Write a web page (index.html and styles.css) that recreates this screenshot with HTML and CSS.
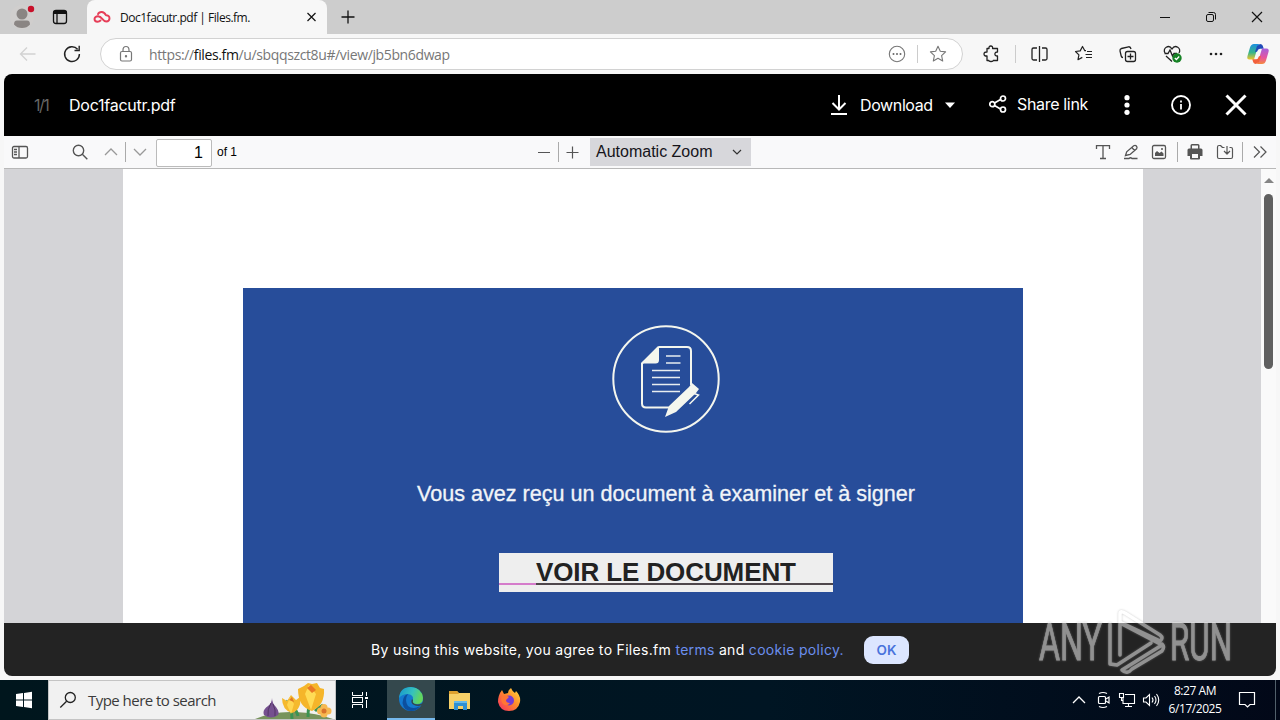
FILE: index.html
```html
<!DOCTYPE html>
<html lang="en">
<head>
<meta charset="utf-8">
<title>Doc1facutr.pdf | Files.fm.</title>
<link rel="stylesheet" href="styles.css">
</head>
<body>
<div class="desktop">
  <div class="tabs">
    <svg class="avatar" width="26" height="34" viewBox="0 0 26 34"><circle cx="12" cy="17" r="12" fill="#d0cecd"/><circle cx="12" cy="14" r="5.500" fill="#8a8583"/><path d="M4 24.500q0-4 3-4h10q3 0 3 4-3 3.500-8 3.500t-8-3.500z" fill="#8a8583"/><circle cx="21" cy="9" r="3.200" fill="#c8102a"/></svg>
    <svg class="spaces" width="20" height="20" viewBox="0 0 20 20" fill="none" stroke="#111" stroke-width="1.300"><rect x="3.500" y="3.500" width="13" height="13" rx="2.500"/><path d="M3.500 5.500h13" stroke-width="3"/><path d="M7 5v11.500"/></svg>
    <div class="tab">
      <svg width="18" height="14" viewBox="0 0 18 14" fill="none" stroke="#e63e58" stroke-width="1.900" stroke-linecap="round" stroke-linejoin="round"><path d="M5 4.200C5.600 2.700 7.200 1.900 8.800 2c2.300.1 3.200 1.500 4.200 3.200 2-.1 3.500 1.200 3.500 3.100 0 2-1.500 3.200-3.300 3.200-1.700 0-2.700-1-3.700-2.300C8.200 7.500 7 6.300 5 6.300 3 6.300 1.500 7.300 1.500 9s1.300 2.700 3 2.700c1.300 0 2.300-.5 3-1.200"/></svg>
      <span class="tab-title">Doc1facutr.pdf | Files.fm.</span>
      <svg width="12" height="12" viewBox="0 0 12 12" stroke="#111" stroke-width="1.200"><path d="M1.500 2l8 8M9.500 2l-8 8"/></svg>
    </div>
    <svg class="newtab" width="20" height="20" viewBox="0 0 20 20" stroke="#111" stroke-width="1.300"><path d="M3.500 10h13M10 3.500v13"/></svg>
    <div class="window-controls">
      <svg width="46" height="34" viewBox="0 0 46 34" stroke="#111"><path d="M18 17.500h10"/></svg>
      <svg width="46" height="34" viewBox="0 0 46 34" fill="none" stroke="#111"><rect x="18.500" y="14.500" width="7" height="7" rx="1.500"/><path d="M20.500 12.500h5q2 0 2 2v5"/></svg>
      <svg width="46" height="34" viewBox="0 0 46 34" stroke="#111" stroke-width="1.200"><path d="M18 12l10 10M28 12L18 22"/></svg>
    </div>
  </div>

  <div class="address">
    <svg class="tool" viewBox="0 0 44 40" fill="none" stroke="#d2d2d2" stroke-width="1.300"><path d="M29.500 20h-15M21 13.500L14.500 20l6.500 6.500"/></svg>
    <svg class="tool" viewBox="0 0 44 40" fill="none" stroke="#222" stroke-width="1.400"><path d="M27.600 15.300A7.400 7.400 0 1 0 29.400 20M29.200 11.800v4.700h-4.700"/></svg>
    <div class="url">
      <svg width="16" height="18" viewBox="0 0 16 18" fill="none" stroke="#777" stroke-width="1.200"><rect x="1.500" y="6.500" width="11" height="9.500" rx="1.500"/><path d="M4 6.500V5q0-3.500 3-3.500T10 5v1.500"/><circle cx="7" cy="11.200" r=".6" fill="#777"/></svg>
      <span class="url-text">https://<b>files.fm</b>/u/sbqqszct8u#/view/jb5bn6dwap</span>
      <svg width="20" height="20" viewBox="0 0 20 20" fill="none" stroke="#777" stroke-width="1.100"><circle cx="10" cy="10" r="7.700"/><g fill="#666" stroke="none"><circle cx="6.500" cy="10" r="1"/><circle cx="10" cy="10" r="1"/><circle cx="13.500" cy="10" r="1"/></g></svg>
      <i class="url-sep"></i>
      <svg width="20" height="20" viewBox="0 0 20 20" fill="none" stroke="#777" stroke-width="1.100" stroke-linejoin="round"><path d="M10 2.300l2.300 5 5.300.6-4 3.700 1.100 5.400L10 14.300 5.300 17l1.100-5.400-4-3.700 5.300-.6z"/></svg>
    </div>
    <svg class="tool ext" viewBox="0 0 44 40" fill="none" stroke="#222" stroke-width="1.300" stroke-linejoin="round"><path d="M18 14.500h2q-.3-2.500 1.800-2.500t1.800 2.500H28.500V18q-2.600-.2-2.600 2t2.600 2v4.500h-4.300q.2 1-2.200 1t-2-1H18V22q-3 .2-3-2t3-2z"/></svg>
    <i class="tool-sep"></i>
    <svg class="tool" viewBox="0 0 44 40" fill="none" stroke="#222" stroke-width="1.300"><path d="M20 14h-3.500q-1.500 0-1.500 1.500v9q0 1.500 1.500 1.500H20M25 14h3.500q1.500 0 1.500 1.500v9q0 1.500-1.500 1.500H25M22.500 12v16"/></svg>
    <svg class="tool fav" viewBox="0 0 44 40" fill="none" stroke="#222" stroke-width="1.200" stroke-linejoin="round"><path d="M24 16.700h-1.200L20.500 12.500l-2.300 4.400-4.700.6 3.400 3.400-.9 4.800 4.300-2.300M25 17.500h5M23.500 20.500h6.500M24 23.500h6"/></svg>
    <svg class="tool" viewBox="0 0 44 40" fill="none" stroke="#222" stroke-width="1.300"><rect x="19.500" y="17.500" width="10" height="10" rx="2"/><path d="M24.500 19.500v6M21.500 22.500h6M17 23.500q-1.500 0-1.800-1.500l-1.200-5q-.3-2 1.500-2.500l7-1.700q2-.3 2.500 2.200"/></svg>
    <svg class="tool" viewBox="0 0 44 40" fill="none" stroke="#222" stroke-width="1.300"><path d="M15 19c-3-5 4-9 7-4 3-5 10-1 7 4M16 22l6 5.500M14.500 19.500h3.500l2-3.500 2.500 6 1.500-2.500h3"/><circle cx="27" cy="24" r="4.700" fill="#168225" stroke="none"/><path d="M24.800 24l1.600 1.500 2.800-3" stroke="#fff"/></svg>
    <svg class="tool" viewBox="0 0 44 40"><g fill="#222"><circle cx="17" cy="20" r="1.300"/><circle cx="22" cy="20" r="1.300"/><circle cx="27" cy="20" r="1.300"/></g></svg>
    <svg class="copilot" width="24" height="24" viewBox="0 0 24 24">
      <defs><linearGradient id="ca" x1="0" y1="0" x2="0" y2="1"><stop offset="0" stop-color="#1b8fe0"/><stop offset=".55" stop-color="#37b58a"/><stop offset="1" stop-color="#f0c52a"/></linearGradient><linearGradient id="cb" x1="0" y1="0" x2="0" y2="1"><stop offset="0" stop-color="#a45fdc"/><stop offset=".6" stop-color="#e8549d"/><stop offset="1" stop-color="#f58a3c"/></linearGradient></defs>
      <path d="M14 2H8Q5 2 4 5.500L1.500 14q-1 3.500 2 3.500H8l3-10Q12 2 14 2z" fill="url(#ca)"/><path d="M14 2q2.500 0 3.200 3l.5 1.800H14q-2 0-3 3L9 10l2-6z" fill="#204bb8"/><path d="M10 22h6q3 0 4-3.500l2.500-8.500q1-3.500-2-3.500H16l-3 10Q12 22 10 22z" fill="url(#cb)"/><path d="M10 22q-2.500 0-3.200-3l-.5-1.800H10q2 0 3-3l2-.2-2 6z" fill="#f2603b"/>
    </svg>
  </div>

  <div class="viewer">
    <header class="file-bar">
      <span class="count">1/1</span>
      <span class="filename">Doc1facutr.pdf</span>
      <svg class="dl" width="20" height="24" viewBox="0 0 20 24" fill="none" stroke="#fff" stroke-width="2"><path d="M10 2v14M3.500 10l6.500 6.500 6.500-6.500M2 21h16"/></svg>
      <span class="download">Download</span>
      <svg class="caret" width="12" height="8" viewBox="0 0 12 8" fill="#fff"><path d="M1 1.500h10L6 7z"/></svg>
      <svg class="share-icon" width="20" height="20" viewBox="0 0 20 20" fill="none" stroke="#fff" stroke-width="1.700"><path d="M6.500 9l6-3.500M6.500 11.500l6 3.500"/><circle cx="4.300" cy="10.200" r="2.500"/><circle cx="15" cy="4.500" r="2.500"/><circle cx="15" cy="15.500" r="2.500"/></svg>
      <span class="share">Share link</span>
      <svg class="more" width="10" height="24" viewBox="0 0 10 24" fill="#fff"><circle cx="5" cy="4.700" r="2.600"/><circle cx="5" cy="12" r="2.600"/><circle cx="5" cy="19.300" r="2.600"/></svg>
      <svg class="info" width="24" height="24" viewBox="0 0 24 24" fill="none" stroke="#fff" stroke-width="1.900"><circle cx="12" cy="12" r="9"/><path d="M12 11v5.500M12 7.500v2" stroke-width="1.800"/></svg>
      <svg class="close" width="24" height="24" viewBox="0 0 24 24" stroke="#fff" stroke-width="3"><path d="M2.500 2.500l19 19M21.500 2.500l-19 19"/></svg>
    </header>

    <div class="pdf-bar">
      <svg class="ic side" viewBox="0 0 20 20" fill="none" stroke="#555" stroke-width="1.300"><rect x="2.500" y="4.500" width="15" height="11.500" rx="1.500"/><path d="M9 4.500V16M4 7.500h3M4 10h3M4 12.500h3"/></svg>
      <svg class="ic find" viewBox="0 0 20 20" fill="none" stroke="#555" stroke-width="1.400"><circle cx="8.500" cy="8.500" r="5.200"/><path d="M12.300 12.300l5 5"/></svg>
      <svg class="ic up" viewBox="0 0 20 20" fill="none" stroke="#999" stroke-width="1.300"><path d="M4 13l6-6 6 6"/></svg>
      <i class="bar-sep first"></i>
      <svg class="ic down" viewBox="0 0 20 20" fill="none" stroke="#999" stroke-width="1.300"><path d="M4 7l6 6 6-6"/></svg>
      <span class="page-input">1</span>
      <span class="of">of 1</span>
      <svg class="ic minus" viewBox="0 0 20 20" stroke="#555" stroke-width="1.200"><path d="M4 10.500h12"/></svg>
      <i class="bar-sep mid"></i>
      <svg class="ic plus" viewBox="0 0 20 20" stroke="#555" stroke-width="1.200"><path d="M4.500 10.500h12M10.500 4.500v12"/></svg>
      <span class="zoom"><span class="zoom-text">Automatic Zoom</span><svg width="12" height="8" viewBox="0 0 12 8" fill="none" stroke="#333" stroke-width="1.200"><path d="M2 2l4 4 4-4"/></svg></span>
      <svg class="ic text" viewBox="0 0 20 20" fill="none" stroke="#555" stroke-width="1.300"><path d="M3.500 7V3.700h13V7M10 3.700v13M7 16.500h6"/></svg>
      <svg class="ic draw" viewBox="0 0 20 20" fill="none" stroke="#555" stroke-width="1.300"><path d="M4.500 13.500l1.200-3.700 7-6q1.500-1 2.700.2t.2 2.800l-6.500 5.700zM10.800 5.500l2.800 3M3 16.500h5q1.500-1.500 3 0h5.500"/></svg>
      <svg class="ic image" viewBox="0 0 20 20"><rect x="3.500" y="3.500" width="13" height="13" rx="1.500" fill="none" stroke="#555" stroke-width="1.300"/><path d="M6 14v-3l2-2 2.500 2 2-1.500 2 2V14z" fill="#555"/><circle cx="13" cy="7" r="1" fill="#555"/></svg>
      <i class="bar-sep third"></i>
      <svg class="ic print" viewBox="0 0 20 20" fill="#555"><path d="M5.500 6.500v-3q0-1.500 1.500-1.500h6q1.500 0 1.500 1.500v3H16q1.500 0 1.500 1.500v6H15v2.500q0 1-1 1H6q-1 0-1-1V14H2.500V8q0-1.500 1.500-1.500z"/><path d="M7 3.500h6v3H7zM7 12h6v4H7z" fill="#f9f9fa"/></svg>
      <svg class="ic save" viewBox="0 0 20 20" fill="none" stroke="#555" stroke-width="1.200" stroke-linejoin="round"><path d="M9.500 5.500h-2l-2-2H4q-1.500 0-1.500 1.500v10q0 1.500 1.500 1.500h12q1.500 0 1.500-1.500V7q0-1.500-1.500-1.500h-1.500M12 4v8M9 9l3 3 3-3"/></svg>
      <i class="bar-sep fourth"></i>
      <svg class="ic tools" viewBox="0 0 20 20" fill="none" stroke="#555" stroke-width="1.200"><path d="M4 4.500L9.500 10 4 15.500M10.500 4.500L16 10l-5.500 5.500"/></svg>
    </div>

    <div class="canvas">
      <div class="page">
        <div class="card">
          <svg class="emblem" width="108" height="110" viewBox="0 0 108 110">
            <circle cx="54" cy="55" r="52.700" fill="none" stroke="#f4f6ee" stroke-width="2"/>
            <path d="M46.500 23H75q4 0 4 4v34M61 83.500H34q-4 0-4-4V39.500L46.500 23" fill="none" stroke="#f4f6ee" stroke-width="2"/>
            <path d="M47 22v14q0 3.500-3.500 3.500H30z" fill="#f4f6ee"/>
            <path d="M54 32h14.500M54 39h14.500M40 46.500h28M40 53.500h28M40 60.500h28M40 67.500h28" stroke="#e8edf0" stroke-width="1.500"/>
            <path d="M80 59l7 6-3 4-20 19-11 5 4-11 20-19z" fill="#f4f6ee"/><path d="M82 69.500l4.500 1.500-9 9" fill="none" stroke="#f4f6ee" stroke-width="1.500"/>
          </svg>
          <div class="lead">Vous avez reçu un document à examiner et à signer</div>
          <div class="cta"><span class="cta-text">VOIR LE DOCUMENT</span><i class="cta-line"></i></div>
        </div>
      </div>
      <div class="scrollbar"><i class="arrow"></i><i class="thumb"></i></div>
    </div>

    <footer class="cookies">
      <span class="cookie-text">By using this website, you agree to Files.fm <a>terms</a> and <a>cookie policy.</a></span>
      <span class="ok">OK</span>
    </footer>
  </div>

  <div class="taskbar">
    <svg class="start" width="48" height="40" viewBox="0 0 48 40" fill="#fff"><path d="M16 14l7-1v6.500h-7zM24 12.900l8-1.100v7.700h-8zM16 20.500h7V27l-7-1zM24 20.500h8v7.700l-8-1.100z"/></svg>
    <div class="search">
      <svg width="20" height="20" viewBox="0 0 20 20" fill="none" stroke="#222" stroke-width="1.300"><circle cx="11.300" cy="7.500" r="5"/><path d="M7.600 11.200L1.300 17.500"/></svg>
      <span class="search-text">Type here to search</span>
      <svg class="flowers" width="82" height="38" viewBox="0 0 82 38">
        <path d="M2 38q18-8 40-7t38 7z" fill="#77935c"/>
        <path d="M39 38q0-14-6-18M55 36q0-12 4-20M62 30q4-4 8-6M45 35q-2-8-7-9" fill="none" stroke="#3b9352" stroke-width="3"/>
        <path d="M19 17q0 5 4 9 4 5 2 8-7 5-14 0-2-5 4-9 4-3 4-8z" fill="#75508f"/><path d="M18 22q-4 7-3 13M20 23q3 6 2 12" stroke="#533565" fill="none"/>
        <path d="M29 17l5 3 4-6 5 5 4-3q2 12-8 16-10-3-10-15z" fill="#f5b92d"/><path d="M37 16l4 7-3 10-4-9z" fill="#ffd650"/><path d="M36 19l3-3 2 5z" fill="#df7826"/>
        <path d="M45 8l6-3 4-3 4 1 5-1 3 5 4 1q1 16-12 22-14-4-14-22z" fill="#f5b52a"/><path d="M56 4l7 9-5 16-6-16z" fill="#ffdb55"/><path d="M54 7l4-3 5 5-4 3z" fill="#e97824"/>
        <g fill="#f7b850"><circle cx="71" cy="26.500" r="3.500"/><circle cx="75" cy="30" r="3.500"/><circle cx="71" cy="33" r="3.500"/><circle cx="67.500" cy="30" r="3.500"/></g><circle cx="71" cy="30" r="2.500" fill="#d9732b"/>
      </svg>
    </div>
    <svg class="taskview" width="20" height="20" viewBox="0 0 20 20" fill="none" stroke="#fff"><path d="M2.500 2v3.500h10V2M2.500 18v-3.500h10V18M16.500 2v4M16.500 10v8"/><rect x="2.500" y="7.500" width="10" height="5"/><path d="M15 8h3" stroke-width="2"/></svg>
    <div class="app active">
      <svg width="26" height="26" viewBox="0 0 26 26"><defs><linearGradient id="ea" x1="0" y1="0" x2="1" y2=".3"><stop offset="0" stop-color="#1695cf"/><stop offset=".6" stop-color="#35c1be"/><stop offset="1" stop-color="#63d65d"/></linearGradient></defs><circle cx="13" cy="13" r="12" fill="#1479cf"/><path d="M1 12Q2 1 13 1q11 1 12 11 0 6-6 6-6 0-4-4 1-5-5-6-6 0-9 4z" fill="url(#ea)"/><path d="M10 8q-4 6 0 12 5 4 12 0-3 5-9 5Q6 25 4.500 17 5 9 10 8z" fill="#0c4f9e"/><path d="M14 13q-2 4 2 6 4 2 8 0l1.500-2.500Q22 19 18 18.300q-4-.8-3-4z" fill="#34484d"/></svg>
    </div>
    <svg class="explorer" width="24" height="24" viewBox="0 0 24 24"><path d="M1 3h8l2 2h11v16H1z" fill="#f6d068"/><path d="M1 3h8l2 3H1z" fill="#dda12f"/><path d="M6 13h13v9h-4v-4h-5v4H6z" fill="#2f8fd3"/><path d="M6 13h13v2H6z" fill="#66b9ea"/></svg>
    <svg class="firefox" width="26" height="26" viewBox="0 0 26 26"><defs><linearGradient id="ff" x1="1" y1="0" x2="0" y2="1"><stop offset="0" stop-color="#ffe040"/><stop offset=".45" stop-color="#ff8b2a"/><stop offset="1" stop-color="#f42a65"/></linearGradient></defs><path d="M6 3l2 4 4-1q0-3 3-5 1 3 4 5l1-2q5 5 4 11-2 9-11 9T2 15Q2 8 6 3z" fill="url(#ff)"/><circle cx="13" cy="13.500" r="5" fill="#743bd3"/><path d="M6 9q4-2 7 1l-3 3q0 3 4 3-3 4-7 1-3-4-1-8z" fill="#ff7534"/></svg>
    <div class="tray">
      <svg width="24" height="24" viewBox="0 0 24 24" fill="none" stroke="#fff" stroke-width="1.300"><path d="M6 15l6-6 6 6"/></svg>
      <svg width="24" height="24" viewBox="0 0 24 24" fill="none" stroke="#fff" stroke-width="1.200"><rect x="7.500" y="8.500" width="7" height="7" rx="1"/><path d="M15 11l3-2v6l-3-2M8 5.500q4-2 8 0M8 18.500q4 2 8 0"/></svg>
      <svg width="24" height="24" viewBox="0 0 24 24" fill="none" stroke="#fff" stroke-width="1.100"><path d="M10 6.500h9.500v9H8V10M13.500 15.500v3M10 18.500h7M4.500 5.500h4v4h-4zM6.500 9.500v3h2"/></svg>
      <svg width="24" height="24" viewBox="0 0 24 24" fill="none" stroke="#fff" stroke-width="1.100"><path d="M4.500 10H7l3.500-3.500v11L7 14H4.500zM13 9.500q2 2.500 0 5M15.500 8q3 4 0 8M17.500 6q4.500 6 0 12"/></svg>
      <span class="clock">8:27 AM<br>6/17/2025</span>
      <svg class="notify" width="24" height="24" viewBox="0 0 24 24" fill="none" stroke="#fff" stroke-width="1.200"><path d="M4.500 4.500h15v12h-4.500l-2.500 2.500-2.500-2.500H4.500z"/></svg>
      <i class="show-desktop"></i>
    </div>
  </div>

  <svg class="watermark" width="220" height="72" viewBox="0 0 220 72">
    <g class="wm-text"><text x="3" y="53" textLength="63" lengthAdjust="spacingAndGlyphs">ANY</text><text x="134" y="53" textLength="62" lengthAdjust="spacingAndGlyphs">RUN</text></g>
    <g class="wm-logo"><path d="M74 17v40l7 1 34-22M84 48V7q0-4 5-1l35 22q4 3 0 6l-4-2-34-16M84 16l42 22-40 25q5 5 10-1l30-18q3-4 0-7"/></g>
  </svg>
</div>
</body>
</html>
```
FILE: styles.css
```css
* { box-sizing: border-box; }
body { margin: 0; font-family: "Open Sans", "Noto Sans", sans-serif; }
svg { display: block; flex: none; }
i { display: block; flex: none; }
span { white-space: nowrap; }
.desktop { position: relative; width: 1280px; height: 720px; overflow: hidden; display: flex; flex-direction: column; background: #f7f7f7; }

.tabs { height: 34px; flex: none; display: flex; align-items: center; background: #cdcdcd; }
.avatar { margin-left: 10px; }
.spaces { margin-left: 14px; }
.tab { width: 240px; height: 34px; margin-left: 17px; padding: 0 9px 0 6px; display: flex; align-items: center; background: #f7f7f7; border-radius: 8px 8px 0 0; }
.tab-title { flex: 1; margin-left: 9px; font-size: 12px; letter-spacing: -.48px; color: #111; }
.newtab { margin-left: 11px; }
.window-controls { display: flex; margin-left: auto; }

.address { height: 40px; flex: none; display: flex; align-items: center; padding-left: 6px; }
.tool { width: 44px; height: 40px; }
.url { width: 863px; height: 32px; margin-left: 6px; padding: 0 14px 0 18px; display: flex; align-items: center; background: #fff; border: 1px solid #d2d2d2; border-radius: 16px; }
.url-text { flex: 1; margin-left: 14px; font-size: 14px; letter-spacing: -.37px; color: #777; }
.url-text b { font-weight: 400; color: #111; }
.url-sep { width: 1px; height: 18px; margin: 0 10px; background: #ccc; }
.ext { margin-left: 6px; }
.tool-sep { width: 1px; height: 18px; margin: 0 1px 0 2px; background: #ccc; }
.fav { margin-left: 1px; }
.copilot { margin-left: 8px; }

.viewer { height: 602px; flex: none; margin: 0 4px; border-radius: 8px; overflow: hidden; display: flex; flex-direction: column; }
.file-bar { height: 62px; flex: none; display: flex; align-items: center; background: #000; color: #fff; padding-left: 30px; font-family: Inter, sans-serif; font-size: 16px; }
.count { width: 35px; color: #666; letter-spacing: -1.500px; }
.filename { width: 106px; letter-spacing: -.25px; }
.dl { margin-left: 654px; }
.download { width: 73px; margin-left: 11px; letter-spacing: -.38px; }
.caret { margin-left: 11px; }
.share-icon { margin-left: 32px; margin-top: -2px; }
.share { width: 71px; margin-left: 9px; margin-top: -2px; letter-spacing: -.33px; }
.more { margin-left: 34px; }
.info { margin-left: 37px; }
.close { margin-left: 31px; }

.pdf-bar { height: 33px; flex: none; display: flex; align-items: center; background: #f9f9fa; border-bottom: 1px solid #b8b8b8; font-family: "Liberation Sans", sans-serif; }
.ic { width: 20px; height: 20px; }
.side { margin-left: 6px; }
.find { margin-left: 40px; }
.up { margin-left: 11px; }
.bar-sep { width: 1px; height: 20px; background: #aaa; }
.first { margin-left: 4px; }
.down { margin-left: 4px; }
.page-input { width: 56px; height: 28px; margin-left: 6px; margin-top: 1px; padding-right: 8px; background: #fff; border: 1px solid #bbb; border-radius: 2px; text-align: right; font-size: 16px; line-height: 26px; }
.of { width: 22px; margin-left: 5px; font-size: 12px; }
.minus { margin-left: 295px; }
.mid { margin-left: 4px; }
.plus { margin-left: 3px; }
.zoom { width: 161px; height: 28px; margin-left: 8px; padding: 0 8px 0 6px; display: flex; align-items: center; justify-content: space-between; background: #d7d7db; font-size: 16px; color: #15141a; }
.text { margin-left: 342px; }
.draw, .image { margin-left: 8px; }
.third { margin-left: 8px; }
.print { margin-left: 7px; }
.save { margin-left: 10px; }
.fourth { margin-left: 7px; }
.tools { margin-left: 7px; }

.canvas { height: 454px; flex: none; display: flex; justify-content: space-between; background: #d4d4d7; overflow: hidden; }
.page { width: 1020px; margin-left: 119px; padding: 119px 120px 0; background: #fff; }
.card { height: 335px; padding: 36px 0 0 66px; display: flex; flex-direction: column; align-items: center; background: #274d9a; font-family: "Liberation Sans", sans-serif; }
.lead { margin-top: 47px; height: 26px; line-height: 26px; font-size: 21.600px; color: #f1f4f8; white-space: nowrap; -webkit-text-stroke: .3px #f1f4f8; }
.cta { width: 334px; height: 39px; margin-top: 46px; padding-left: 37px; flex: none; display: flex; flex-direction: column; align-items: stretch; background: linear-gradient(#d57ccb, #d57ccb) 0 30px / 37px 2px no-repeat #eee; }
.cta-text { height: 30px; line-height: 39px; font-size: 26px; font-weight: 700; letter-spacing: -.1px; color: #222; }
.cta-line { height: 2px; background: #4e464b; }
.scrollbar { width: 15px; display: flex; flex-direction: column; align-items: center; background: #fafafa; }
.arrow { margin-top: 9px; border: 5px solid transparent; border-top: 0; border-bottom: 5px solid #858585; }
.thumb { width: 9px; height: 175px; margin-top: 11px; border-radius: 5px; background: #606060; }

.cookies { height: 53px; flex: none; display: flex; align-items: center; padding-left: 367px; background: #232323; color: #fff; font-family: Inter, sans-serif; font-size: 14px; }
.cookie-text { width: 472px; letter-spacing: .31px; }
.cookie-text a { color: #6b8fee; }
.ok { width: 45px; height: 28px; margin-left: 21px; border-radius: 9px; background: #dce6ff; color: #4873dc; font-size: 13.500px; font-weight: 600; line-height: 28px; text-align: center; }

.taskbar { height: 40px; flex: none; margin-top: 4px; display: flex; align-items: center; background: linear-gradient(90deg, #00161d, #001523 60%, #020818); }
.search { width: 288px; height: 40px; padding: 0 0 0 10px; border: 1px solid #c4c4c4; display: flex; align-items: center; background: #f1f1f1; }
.search-text { flex: 1; margin-left: 9px; font-size: 15px; letter-spacing: -.53px; color: #3b3b3b; }
.taskview { margin-left: 14px; }
.app { width: 48px; height: 40px; margin-left: 17px; display: flex; align-items: center; justify-content: center; }
.active { background: #34484d; border-bottom: 2px solid #76b9ed; }
.explorer { margin-left: 13px; }
.firefox { margin-left: 24px; }
.tray { margin-left: auto; display: flex; align-items: center; }
.clock { width: 60px; margin-left: 2px; text-align: center; font-size: 12px; line-height: 18px; letter-spacing: -.45px; color: #fff; }
.notify { margin-left: 10px; }
.show-desktop { width: 1px; height: 40px; margin: 0 4px 0 16px; background: #52606b; }

.watermark { position: absolute; left: 1036px; top: 607px; opacity: .5; filter: drop-shadow(0 0 1px #999); }
.wm-text { fill: #fff; stroke: #fff; stroke-width: .8px; font-family: Roboto, sans-serif; font-size: 52px; font-weight: 400; }
.wm-logo { fill: none; stroke: #fff; stroke-width: 3.500; stroke-linecap: round; stroke-linejoin: round; }
```
